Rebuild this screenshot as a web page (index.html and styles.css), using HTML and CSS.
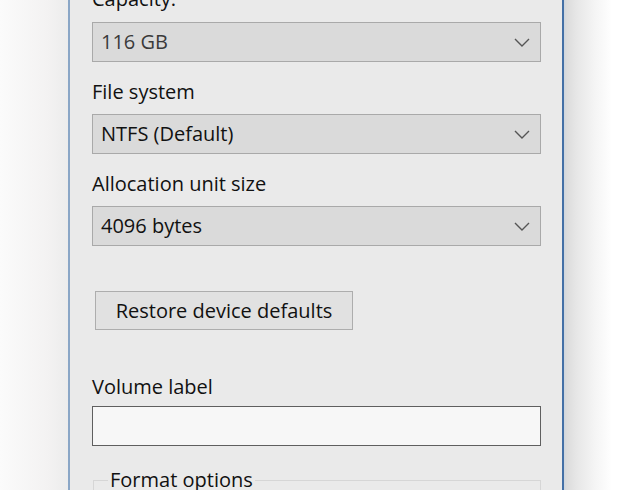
FILE: index.html
```html
<!DOCTYPE html>
<html>
<head>
<meta charset="utf-8">
<link rel="stylesheet" href="styles.css">
</head>
<body>
<div class="stage">
  <div class="side side-left"></div>
  <div class="window">
    <div class="content">
      <div class="label first">Capacity:</div>
      <div class="combo disabled">
        <span class="combo-text">116 GB</span>
        <svg class="chev" width="16" height="9" viewBox="0 0 16 9"><polyline points="1,1 8,8 15,1" fill="none" stroke="#555" stroke-width="1.4"/></svg>
      </div>
      <div class="label">File system</div>
      <div class="combo">
        <span class="combo-text">NTFS (Default)</span>
        <svg class="chev" width="16" height="9" viewBox="0 0 16 9"><polyline points="1,1 8,8 15,1" fill="none" stroke="#555" stroke-width="1.4"/></svg>
      </div>
      <div class="label">Allocation unit size</div>
      <div class="combo">
        <span class="combo-text">4096 bytes</span>
        <svg class="chev" width="16" height="9" viewBox="0 0 16 9"><polyline points="1,1 8,8 15,1" fill="none" stroke="#555" stroke-width="1.4"/></svg>
      </div>
      <div class="btn-row">
        <div class="button">Restore device defaults</div>
      </div>
      <div class="label vol">Volume label</div>
      <div class="textbox"></div>
      <fieldset class="group">
        <legend class="legend">Format options</legend>
      </fieldset>
    </div>
  </div>
  <div class="side side-right"></div>
</div>
</body>
</html>
```

FILE: styles.css
```css
html, body {
  margin: 0;
  padding: 0;
  width: 640px;
  height: 490px;
  overflow: hidden;
  background: #ffffff;
}

.stage {
  display: flex;
  height: 490px;
  font-family: "Open Sans", "Noto Sans", sans-serif;
  font-size: 20px;
  color: #111;
}

.side-left {
  width: 68px;
  flex: none;
  background: linear-gradient(to right, #fbfbfb 0%, #f3f2f2 70%, #ececec 100%);
}

.side-right {
  flex: 1;
  background: linear-gradient(to right, #cfd6de 0px, #dcdcdc 3px, #e6e6e6 12px, #f4f4f4 30px, #ffffff 48px);
}

.window {
  width: 492px;
  flex: none;
  background: #eaeaea;
  border-left: 2px solid #8aa6c6;
  border-right: 2px solid #4470a6;
  height: 490px;
  overflow: hidden;
}

.content {
  padding: 0 21px 0 22px;
  margin-top: -13px;
}

.label {
  height: 24px;
  line-height: 24px;
  white-space: nowrap;
  margin-top: 18px;
  margin-bottom: 10px;
}

.label.first {
  margin-top: 0;
  margin-bottom: 11px;
}

.label.vol {
  margin-top: 45px;
  margin-bottom: 7px;
}

.combo {
  height: 38px;
  border: 1px solid #a9a9a9;
  background: #dadada;
  display: flex;
  align-items: center;
  justify-content: space-between;
  padding: 0 10px 0 8px;
}

.combo.disabled .combo-text {
  color: #3a3a3a;
}

.combo-text {
  line-height: 24px;
  white-space: nowrap;
}

.chev {
  display: block;
}

.btn-row {
  display: flex;
  padding-left: 3px;
  margin-top: 45px;
}

.button {
  height: 37px;
  width: 256px;
  border: 1px solid #adadad;
  background: #e1e1e1;
  display: flex;
  align-items: center;
  justify-content: center;
  white-space: nowrap;
}

.textbox {
  height: 38px;
  border: 1px solid #5f5f5f;
  background: #f7f7f7;
}

.group {
  margin: 22px 0 0 1px;
  padding: 0 0 0 14px;
  border: 1px solid #d6d6d6;
  border-bottom: none;
  height: 60px;
}

.legend {
  padding: 0 2px;
  line-height: 24px;
  white-space: nowrap;
}
```
